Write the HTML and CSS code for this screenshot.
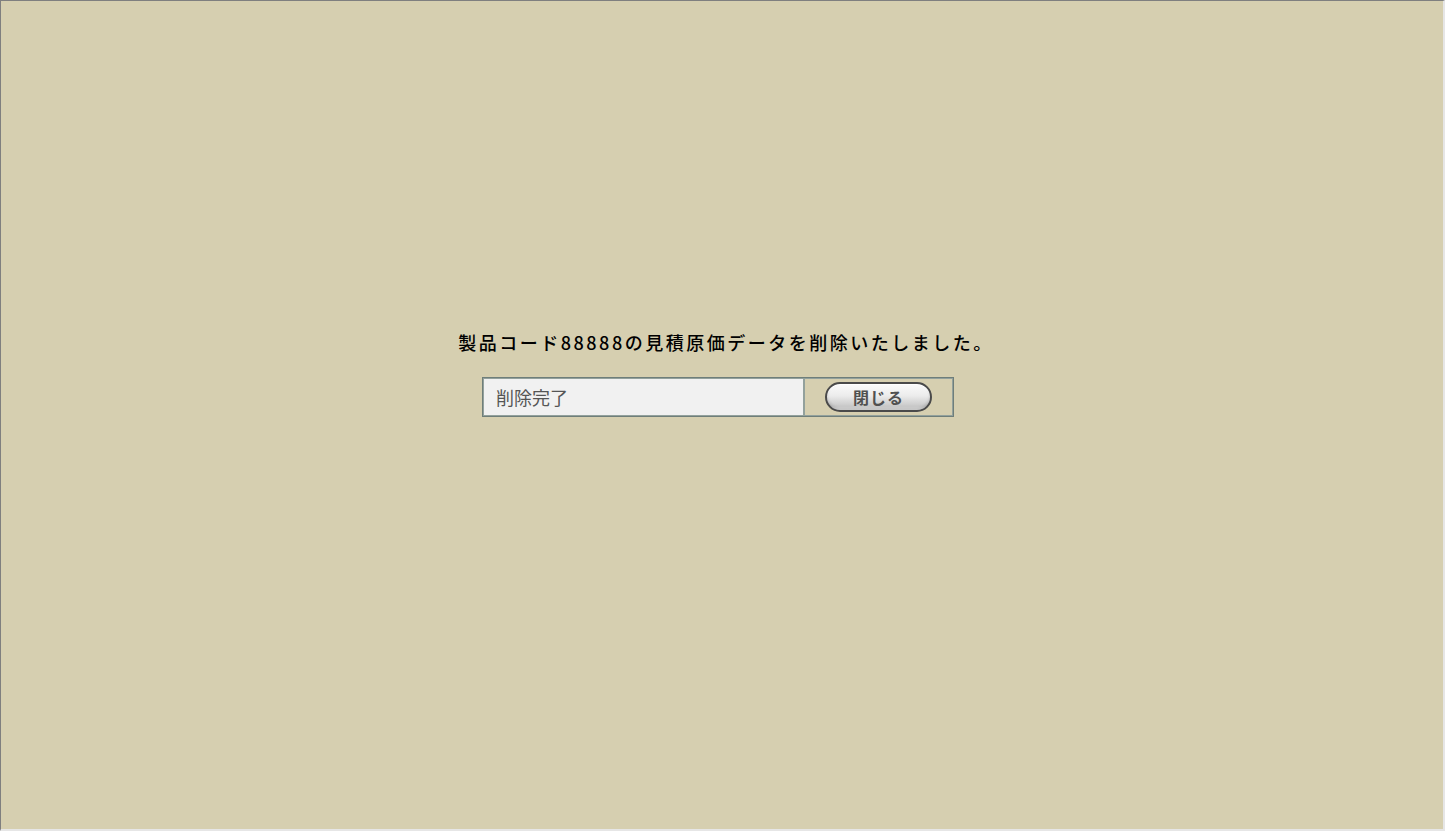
FILE: index.html
```html
<!DOCTYPE html>
<html lang="ja">
<head>
<meta charset="utf-8">
<link rel="stylesheet" href="styles.css">
</head>
<body>
<div class="frame">
  <p class="message">製品コード88888の見積原価データを削除いたしました。</p>
  <table class="result">
    <tr>
      <td class="status">削除完了</td>
      <td class="action"><button class="pill" type="button">閉じる</button></td>
    </tr>
  </table>
</div>
</body>
</html>
```
FILE: styles.css
```css
html, body {
  margin: 0;
  padding: 0;
  height: 100%;
}
body {
  background: #d6cfb0;
  font-family: "Noto Sans CJK JP", "Noto Sans", sans-serif;
}
.frame {
  box-sizing: border-box;
  height: 831px;
  width: 1445px;
  border-top: 1px solid #7f7f7f;
  border-left: 1px solid #7f7f7f;
  border-right: 2px solid #e6e6e6;
  border-bottom: 2px solid #e6e6e6;
  display: flex;
  flex-direction: column;
  align-items: center;
  padding-top: 328px;
}
.message {
  margin: 0 0 22px 0;
  font-size: 18px;
  line-height: 26px;
  letter-spacing: 2.5px;
  color: #000;
  font-weight: 500;
  padding-left: 8px;
}
.result {
  border-collapse: separate;
  border-spacing: 0;
  border: 1px solid #6f7e7a;
  width: 472px;
  height: 40px;
  margin-left: -8px;
}
.result td {
  border: 1px solid #93a19c;
  padding: 0;
}
.status {
  width: 307px;
  background: #f1f1f1;
  color: #555;
  font-size: 18px;
  padding-left: 12px !important;
  letter-spacing: 0;
}
.action {
  text-align: center;
  background: #d6cfb0;
}
.pill {
  width: 107px;
  height: 30px;
  border-radius: 15px;
  border: 2px solid #4a4a4a;
  background: linear-gradient(#fbfbfb 0%, #ececec 45%, #c9c9c9 85%, #e8e8e8 100%);
  box-shadow: inset 0 1px 0 #fff, inset 0 -2px 3px rgba(0,0,0,0.15);
  font-family: "Noto Sans CJK JP", sans-serif;
  font-size: 16px;
  font-weight: 700;
  color: #505050;
  padding: 0;
  letter-spacing: 1px;
  margin-left: 0;
  margin-top: -1px;
  display: block;
  margin-right: auto;
  margin-left: 20px;
}
```
